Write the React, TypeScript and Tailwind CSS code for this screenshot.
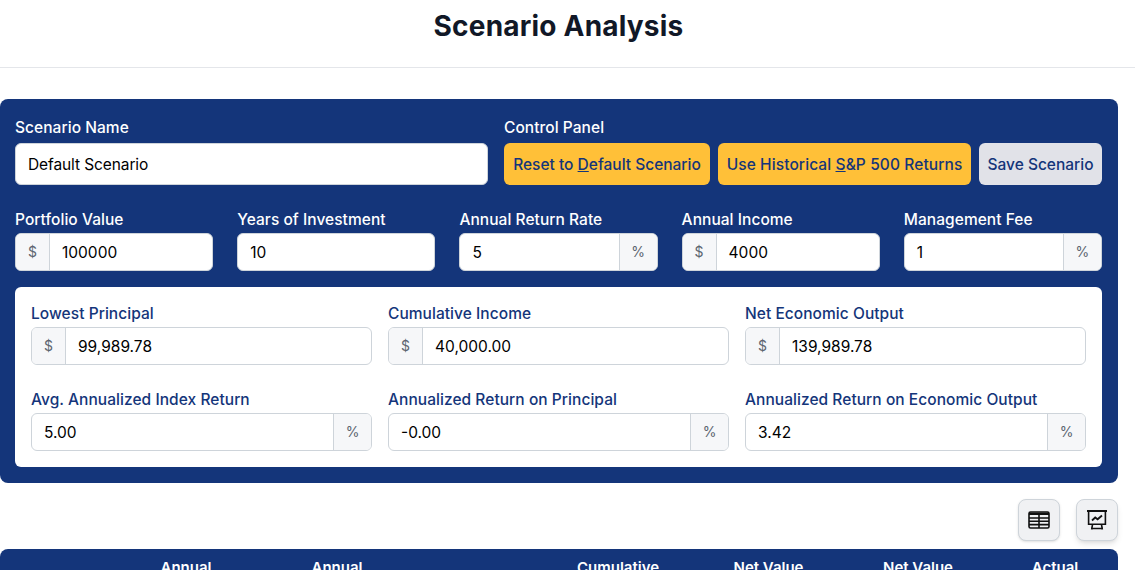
const Affix = ({ children, side }: { children: string; side: "left" | "right" }) => (
  <span
    className={`flex shrink-0 items-center justify-center bg-[#f6f7f9] text-sm text-[#5c6570] border-[#ced4da] ${
      side === "left" ? "w-[34px] border-r" : "w-[38px] border-l"
    }`}
  >
    {children}
  </span>
);

type FieldProps = {
  label: string;
  value: string;
  prefix?: string;
  suffix?: string;
  dark?: boolean;
};

const Field = ({ label, value, prefix, suffix, dark }: FieldProps) => (
  <div className="flex flex-col">
    <label
      className={`h-[22px] text-[15.5px] font-medium leading-[22px] tracking-[0.05px] ${
        dark ? "-mt-[1px] mb-[2px] text-white" : "mb-[2px] text-[#14357a]"
      }`}
    >
      {label}
    </label>
    <div className="flex h-[38px] overflow-hidden rounded-md border border-[#ced4da] bg-white">
      {prefix && <Affix side="left">{prefix}</Affix>}
      <div className="flex min-w-0 flex-1 items-center px-3 pt-[1px] text-[15.5px] text-black">{value}</div>
      {suffix && <Affix side="right">{suffix}</Affix>}
    </div>
  </div>
);

const TableIcon = () => (
  <svg width="22" height="18" viewBox="0 0 22 18" fill="none" stroke="#111" strokeWidth="1.6">
    <rect x="1" y="1" width="20" height="16" rx="1.5" />
    <path d="M1 2.8h20" strokeWidth="2.4" />
    <path d="M1 7h20M1 10.3h20M1 13.6h20M11 4v13" />
  </svg>
);

const ChartIcon = () => (
  <svg width="22" height="22" viewBox="0 0 22 22" fill="none" stroke="#111" strokeWidth="1.6">
    <path d="M1 2h20" strokeWidth="2" />
    <path d="M2.6 2v13.2h16.8V2" />
    <path d="M6 11.5l3.2-3 2.4 1.8L16 6.5" strokeWidth="1.8" />
    <path d="M5 19.5h12M6.6 15.2L5.6 20.5M15.4 15.2l1 5.3" />
  </svg>
);

const headerCols = ["", "Annual", "Annual", "", "Cumulative", "Net Value", "Net Value", "Actual"];

export default function App() {
  return (
    <div className="h-[570px] w-[1135px] overflow-hidden bg-white font-['Inter',sans-serif]">
      <div className="w-[1118px]">
        <header className="flex h-[68px] w-[1135px] items-start border-b border-[#e4e6ea]">
          <h1 className="w-[1117px] pt-[8px] text-center text-[28px] font-bold leading-[36px] tracking-[0.2px] text-[#111827]">
            Scenario Analysis
          </h1>
        </header>

        <section className="mt-[31px] rounded-lg bg-[#14357a] pb-4 pl-[15px] pr-4 pt-[16px]">
          <div className="flex gap-4">
            <div className="w-[473px] shrink-0">
              <div className="mb-[5px] h-[23px] text-[15.5px] font-medium leading-[25px] tracking-[0.05px] text-white">
                Scenario Name
              </div>
              <div className="flex h-[42px] items-center rounded-md border border-[#ced4da] bg-white px-3 pt-[2px] text-[15.5px] tracking-[-0.1px] text-black">
                Default Scenario
              </div>
            </div>
            <div className="flex-1">
              <div className="mb-[5px] h-[23px] text-[15.5px] font-medium leading-[25px] tracking-[0.05px] text-white">
                Control Panel
              </div>
              <div className="flex gap-2">
                <button className="h-[42px] w-[206px] rounded-md bg-[#ffc038] pt-[1px] text-[15.5px] font-medium text-[#14357a]">
                  Reset to <span className="underline">D</span>efault Scenario
                </button>
                <button className="h-[42px] w-[253px] rounded-md bg-[#ffc038] pt-[1px] text-[15.5px] font-medium tracking-[0.1px] text-[#14357a]">
                  Use Historical <span className="underline">S</span>&amp;P 500 Returns
                </button>
                <button className="h-[42px] w-[123px] rounded-md bg-[#e1e2e8] pt-[1px] text-[15.5px] font-medium text-[#14357a]">
                  Save Scenario
                </button>
              </div>
            </div>
          </div>

          <div className="mt-[25px] grid grid-cols-5 gap-6">
            <Field dark label="Portfolio Value" prefix="$" value="100000" />
            <Field dark label="Years of Investment" value="10" />
            <Field dark label="Annual Return Rate" suffix="%" value="5" />
            <Field dark label="Annual Income" prefix="$" value="4000" />
            <Field dark label="Management Fee" suffix="%" value="1" />
          </div>

          <div className="mt-4 grid grid-cols-3 gap-x-4 gap-y-[24px] rounded-md bg-white p-4">
            <Field label="Lowest Principal" prefix="$" value="99,989.78" />
            <Field label="Cumulative Income" prefix="$" value="40,000.00" />
            <Field label="Net Economic Output" prefix="$" value="139,989.78" />
            <Field label="Avg. Annualized Index Return" suffix="%" value="5.00" />
            <Field label="Annualized Return on Principal" suffix="%" value="-0.00" />
            <Field label="Annualized Return on Economic Output" suffix="%" value="3.42" />
          </div>
        </section>

        <div className="mt-4 flex justify-end gap-4">
          <button className="flex h-[42px] w-[42px] items-center justify-center rounded-lg border border-[#ced4da] bg-[#f0f1f3] shadow-sm">
            <TableIcon />
          </button>
          <button className="flex h-[42px] w-[42px] items-center justify-center rounded-lg border border-[#ced4da] bg-[#f0f1f3] shadow-md">
            <ChartIcon />
          </button>
        </div>

        <div className="mt-2 grid h-[60px] grid-cols-[110px_152px_150px_131px_150px_151px_148px_126px] rounded-t-lg bg-[#14357a] pt-[9px]">
          {headerCols.map((col, i) => (
            <div key={i} className="text-center text-[15px] font-semibold leading-5 text-white">
              {col}
            </div>
          ))}
        </div>
      </div>
    </div>
  );
}
